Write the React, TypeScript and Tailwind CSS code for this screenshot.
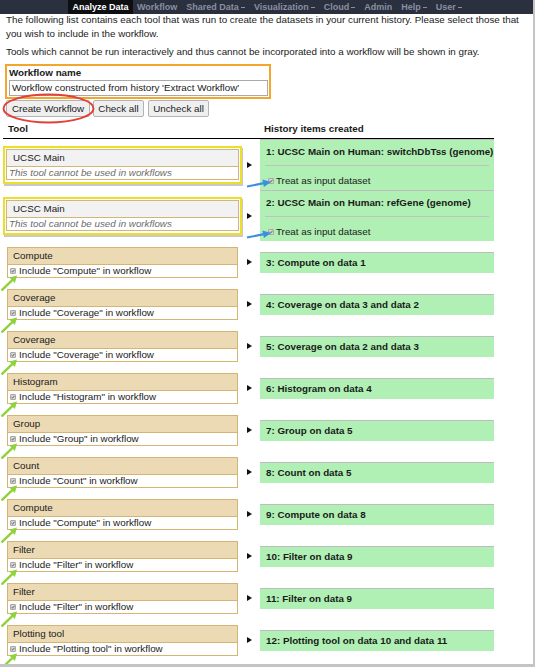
import React from "react";

const tools = [
  { name: "Compute", out: "3: Compute on data 1" },
  { name: "Coverage", out: "4: Coverage on data 3 and data 2" },
  { name: "Coverage", out: "5: Coverage on data 2 and data 3" },
  { name: "Histogram", out: "6: Histogram on data 4" },
  { name: "Group", out: "7: Group on data 5" },
  { name: "Count", out: "8: Count on data 5" },
  { name: "Compute", out: "9: Compute on data 8" },
  { name: "Filter", out: "10: Filter on data 9" },
  { name: "Filter", out: "11: Filter on data 9" },
  { name: "Plotting tool", out: "12: Plotting tool on data 10 and data 11" },
];

const navItems = [
  { label: "Workflow", menu: false },
  { label: "Shared Data", menu: true },
  { label: "Visualization", menu: true },
  { label: "Cloud", menu: true },
  { label: "Admin", menu: false },
  { label: "Help", menu: true },
  { label: "User", menu: true },
];

const Checkbox = () => (
  <span className="inline-flex w-[6px] h-[6px] shrink-0 items-center justify-center rounded-[1px] border border-[#a8a8a8] bg-[#d6d6d6]">
    <svg width="4" height="4" viewBox="0 0 4 4">
      <path d="M0.5 2.1 L1.6 3.1 L3.5 0.8" fill="none" stroke="#555" strokeWidth="0.9" />
    </svg>
  </span>
);

const Pointer = () => (
  <span className="w-0 h-0 border-y-[3.5px] border-y-transparent border-l-[5px] border-l-[#111]" />
);

const GreenArrow = () => (
  <svg className="absolute left-[-7px] top-[25px] z-10" width="18" height="18" viewBox="0 0 18 18">
    <line x1="0.5" y1="17.5" x2="11.5" y2="6.8" stroke="#8fd23e" strokeWidth="2.4" />
    <polygon points="16,2.5 8.4,4.5 13.9,10" fill="#8fd23e" />
  </svg>
);

const BlueArrow = () => (
  <svg className="absolute left-[243px] top-[37px] z-10" width="28" height="14" viewBox="0 0 28 14">
    <line x1="1" y1="10.5" x2="18" y2="7.2" stroke="#3b8fe2" strokeWidth="2.2" />
    <polygon points="25,6 16.4,3.6 17.9,11" fill="#3b8fe2" />
  </svg>
);

function InputRow({ title }: { title: string }) {
  return (
    <div className="relative flex h-[51px]">
      <div className="w-[241px] flex items-center">
        <div className="w-[239px] border-2 border-[#ecdf2a] p-[1px] pb-[2px] shadow-[1px_2px_0_#c9c9c9]">
          <div className="border border-[#d3b57c]">
            <div className="h-[17px] bg-[#f2f2f2] border-b border-[#d3b57c] flex items-center pl-[6px]">UCSC Main</div>
            <div className="h-[12px] flex items-center pl-[2px] italic text-[#6b6b6b]">This tool cannot be used in workflows</div>
          </div>
        </div>
      </div>
      <div className="w-[16px] flex items-center pl-[3px]">
        <Pointer />
      </div>
      <div className="w-[234px] bg-[#b0f0b4] border-t border-[#bdbdbd] pt-[6px]">
        <div className="pl-[6px] font-bold whitespace-nowrap">{title}</div>
        <div className="mx-[5px] mt-[7px] border-t border-[#c2c2c2]" />
        <div className="mt-[9px] pl-[8px] flex items-center gap-[2px]">
          <Checkbox />
          <span>Treat as input dataset</span>
        </div>
      </div>
      <BlueArrow />
    </div>
  );
}

export default function App() {
  return (
    <div className="w-[535px] h-[667px] bg-white border-r-2 border-b-[3px] border-[#c4c4c4] overflow-hidden font-['Liberation_Sans',Arial,sans-serif] text-[9.8px] leading-[12px] text-[#1a1a1a]">
      <div className="h-[14px] bg-[#2b303f] flex pl-[68px] text-[9px] leading-[14px] font-bold">
        <div className="w-[65px] bg-[#0e0f13] text-white text-center">Analyze Data</div>
        <div className="flex gap-[9px] pl-[4px] text-[#8a8fa0]">
          {navItems.map((n) => (
            <span key={n.label} className="flex items-center">
              {n.label}
              {n.menu && <span className="ml-[2px] mt-[1px] w-[4px] h-[1.5px] bg-[#8a8fa0]" />}
            </span>
          ))}
        </div>
      </div>

      <div className="px-[5px]">
        <p className="pl-[1px] leading-[14px] -mt-[1px] whitespace-nowrap">
          The following list contains each tool that was run to create the datasets in your current history. Please select those that
          <br />
          you wish to include in the workflow.
        </p>
        <p className="pl-[1px] leading-[14px] mt-[4px]">
          Tools which cannot be run interactively and thus cannot be incorporated into a workflow will be shown in gray.
        </p>

        <div className="mt-[5px] w-[266px] border-2 border-[#f3a62c] px-[2px] pt-[1px] pb-[1px]">
          <div className="font-bold h-[12px]">Workflow name</div>
          <div className="mt-[1px] h-[16px] w-[259px] border border-[#a9a9a9] bg-white pl-[2px] flex items-center">
            Workflow constructed from history 'Extract Workflow'
          </div>
        </div>

        <div className="relative mt-[1px] ml-[1px] flex gap-[3px]">
          <button className="h-[17px] w-[84px] border border-[#b3b3b3] rounded-[2px] bg-[#efefef]">Create Workflow</button>
          <button className="h-[17px] w-[51px] border border-[#b3b3b3] rounded-[2px] bg-[#efefef]">Check all</button>
          <button className="h-[17px] w-[61px] ml-[1px] border border-[#b3b3b3] rounded-[2px] bg-[#efefef]">Uncheck all</button>
          <svg className="absolute left-[-4px] top-[-7px]" width="94" height="32" viewBox="0 0 94 32">
            <ellipse cx="46.5" cy="15.5" rx="45" ry="14" fill="none" stroke="#e2403a" strokeWidth="2" />
          </svg>
        </div>

        <div className="-ml-[2px] w-[491px]">
          <div className="mt-[5px] flex font-bold pt-[1px] pb-[3px] border-b border-black">
            <div className="w-[261px] pl-[5px]">Tool</div>
            <div>History items created</div>
          </div>

          <InputRow title="1: UCSC Main on Human: switchDbTss (genome)" />
          <InputRow title="2: UCSC Main on Human: refGene (genome)" />

          {tools.map((t, i) => (
            <div key={i} className="flex h-[42px]">
              <div className="w-[241px] flex items-center">
                <div className="relative ml-[4px] w-[231px] border border-[#d5b573]">
                  <div className="h-[17px] bg-[#ecdab4] border-b border-[#d5b573] flex items-center pl-[5px]">{t.name}</div>
                  <div className="h-[12px] flex items-center pl-[2px] gap-[3px]">
                    <Checkbox />
                    <span>Include "{t.name}" in workflow</span>
                  </div>
                  <GreenArrow />
                </div>
              </div>
              <div className="w-[16px] flex items-center pl-[3px]">
                <Pointer />
              </div>
              <div className="w-[234px] flex items-center">
                <div className="w-full h-[21px] bg-[#b0f0b4] border-t border-[#bdbdbd] flex items-center pl-[6px] font-bold">{t.out}</div>
              </div>
            </div>
          ))}
        </div>
      </div>
    </div>
  );
}
